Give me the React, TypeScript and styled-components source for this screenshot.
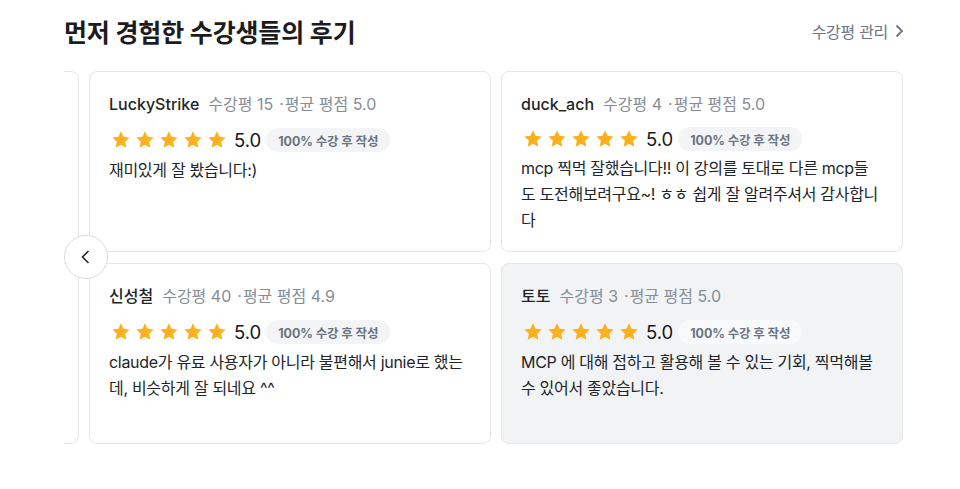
import React from "react";
import styled, { createGlobalStyle } from "styled-components";

const Global = createGlobalStyle`
  html, body { margin: 0; padding: 0; background: #ffffff; }
  body { font-family: Inter, "Noto Sans CJK KR", sans-serif; color: #212529; }
  * { box-sizing: border-box; }
`;

const Section = styled.section`
  width: 960px;
  padding: 14px 56px 0 64px;
`;

const Header = styled.div`
  display: flex;
  align-items: center;
  justify-content: space-between;
  height: 34px;
`;

const Title = styled.h2`
  margin: 0;
  font-family: Inter, "Noto Sans CJK KR", sans-serif;
  font-size: 25px;
  font-weight: 700;
  color: #1c1c1e;
  letter-spacing: -0.15px;
`;

const ManageLink = styled.a`
  display: flex;
  align-items: center;
  gap: 7px;
  font-size: 16px;
  letter-spacing: -0.3px;
  color: #6d7582;
  text-decoration: none;
  cursor: pointer;
`;

const Carousel = styled.div`
  position: relative;
  margin-top: 23px;
`;

const Viewport = styled.div`
  overflow: hidden;
  width: 840px;
`;

const Track = styled.div`
  display: grid;
  grid-template-columns: repeat(3, 402px);
  grid-template-rows: repeat(2, 181px);
  grid-auto-flow: column;
  column-gap: 10px;
  row-gap: 11px;
  margin-left: -387px;
`;

const Card = styled.article<{ $hover?: boolean }>`
  border: 1px solid #e3e6ea;
  border-radius: 8px;
  background: ${(p) => (p.$hover ? "#f1f3f5" : "#ffffff")};
  padding: 21px 20px 20px 19px;
  display: flex;
  flex-direction: column;
  overflow: hidden;
`;

const UserRow = styled.div`
  display: flex;
  align-items: baseline;
  font-size: 16px;
  line-height: 22px;
  white-space: nowrap;
`;

const Name = styled.span`
  color: #212529;
  font-weight: 500;
  margin-right: 9px;
`;

const Meta = styled.span`
  color: #858e96;
`;

const Dot = styled.span`
  color: #858e96;
  margin: 0 1px 0 6px;
`;

const RatingRow = styled.div`
  display: flex;
  align-items: center;
  margin-top: 12px;
  height: 26px;
`;

const Stars = styled.div`
  display: flex;
  gap: 4px;
  margin-left: 2px;
`;

const Score = styled.span`
  font-size: 18.5px;
  color: #16181b;
  margin-left: 7px;
  margin-right: 5px;
`;

const Badge = styled.span<{ $onGray?: boolean }>`
  display: inline-flex;
  align-items: center;
  height: 24px;
  padding: 0 12px;
  border-radius: 12px;
  background: ${(p) => (p.$onGray ? "#f8f9fa" : "#f2f4f6")};
  color: #6b7480;
  font-size: 12.5px;
  font-weight: 700;
  letter-spacing: -0.1px;
`;

const Body = styled.p`
  margin: 4px 0 0 0;
  font-size: 16px;
  letter-spacing: -0.3px;
  line-height: 26px;
  color: #212529;
`;

const PrevButton = styled.button`
  position: absolute;
  left: 0;
  top: 164px;
  width: 44px;
  height: 44px;
  border-radius: 50%;
  border: 1px solid #d9dde2;
  background: #ffffff;
  display: flex;
  align-items: center;
  justify-content: center;
  padding: 0;
  cursor: pointer;
`;

const Star = () => (
  <svg width="20" height="20" viewBox="0 0 24 24">
    <path
      d="M12 1.6l3.1 6.6 7.2.9-5.3 5 1.4 7.2L12 17.8l-6.4 3.5 1.4-7.2-5.3-5 7.2-.9z"
      fill="#fdb01e"
    />
  </svg>
);

type Review = {
  name: string;
  count: number;
  avg: string;
  text: string;
  hover?: boolean;
};

const reviews: Review[] = [
  { name: "김지훈", count: 12, avg: "5.0", text: "좋은 강의 감사합니다." },
  { name: "이서연", count: 8, avg: "4.8", text: "많은 도움이 되었습니다." },
  { name: "LuckyStrike", count: 15, avg: "5.0", text: "재미있게 잘 봤습니다:)" },
  {
    name: "신성철",
    count: 40,
    avg: "4.9",
    text: "claude가 유료 사용자가 아니라 불편해서 junie로 했는데, 비슷하게 잘 되네요 ^^",
  },
  {
    name: "duck_ach",
    count: 4,
    avg: "5.0",
    text: "mcp 찍먹 잘했습니다!! 이 강의를 토대로 다른 mcp들도 도전해보려구요~! ㅎㅎ 쉽게 잘 알려주셔서 감사합니다",
  },
  {
    name: "토토",
    count: 3,
    avg: "5.0",
    text: "MCP 에 대해 접하고 활용해 볼 수 있는 기회, 찍먹해볼 수 있어서 좋았습니다.",
    hover: true,
  },
];

export default function App() {
  return (
    <>
      <Global />
      <Section>
        <Header>
          <Title>먼저 경험한 수강생들의 후기</Title>
          <ManageLink>
            수강평 관리
            <svg width="9" height="14" viewBox="0 0 9 14">
              <path d="M1.5 1.5L7 7l-5.5 5.5" fill="none" stroke="#6d7582" strokeWidth="1.8" />
            </svg>
          </ManageLink>
        </Header>
        <Carousel>
          <Viewport>
            <Track>
              {reviews.map((r, i) => (
                <Card key={i} $hover={r.hover}>
                  <UserRow>
                    <Name>{r.name}</Name>
                    <Meta>수강평 {r.count}</Meta>
                    <Dot>·</Dot>
                    <Meta>평균 평점 {r.avg}</Meta>
                  </UserRow>
                  <RatingRow>
                    <Stars>
                      {[0, 1, 2, 3, 4].map((s) => (
                        <Star key={s} />
                      ))}
                    </Stars>
                    <Score>5.0</Score>
                    <Badge $onGray={r.hover}>100% 수강 후 작성</Badge>
                  </RatingRow>
                  <Body>{r.text}</Body>
                </Card>
              ))}
            </Track>
          </Viewport>
          <PrevButton aria-label="이전">
            <svg width="14" height="16" viewBox="0 0 14 16">
              <path d="M9.5 2L3.5 8l6 6" fill="none" stroke="#212529" strokeWidth="1.6" />
            </svg>
          </PrevButton>
        </Carousel>
      </Section>
    </>
  );
}
